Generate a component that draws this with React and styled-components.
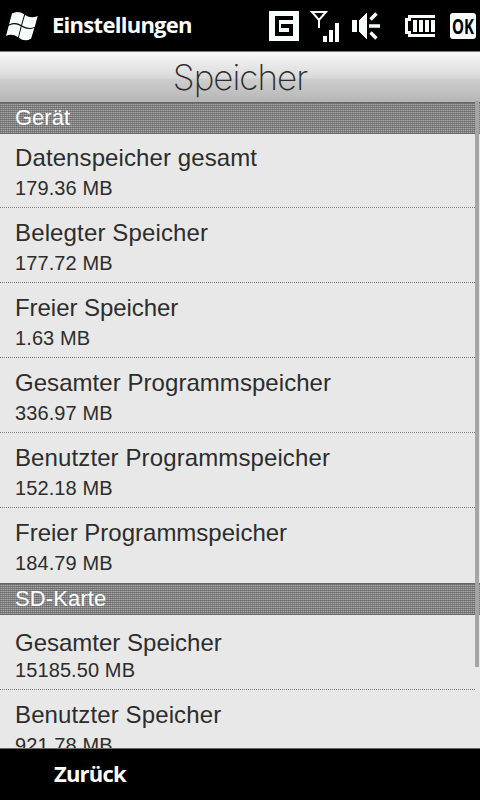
import React from 'react';
import styled, { createGlobalStyle } from 'styled-components';

const Global = createGlobalStyle`
  * { box-sizing: border-box; }
  body { margin: 0; background: #000; }
`;
const Screen = styled.div`
  position: relative;
  width: 480px;
  height: 800px;
  display: flex;
  flex-direction: column;
  overflow: hidden;
  background: #000;
  font-family: "Liberation Sans", Arial, sans-serif;
  color: #2d2d2d;
`;
const StatusBar = styled.header`
  height: 51px;
  flex: none;
  display: flex;
  align-items: flex-start;
  color: #fff;
`;
const StatusTitle = styled.span`
  width: 211px;
  margin-left: 11px;
  padding-top: 9px;
  font: 700 22px/30px "Open Sans", sans-serif;
  letter-spacing: -0.72px;
  white-space: nowrap;
`;
const StatusIcons = styled.svg`
  display: block;
  flex: none;
`;
const TitleBar = styled.h1`
  height: 51px;
  flex: none;
  margin: 0;
  border-top: 1px solid #7b7b7b;
  background: linear-gradient(#f8f8f8 0, #d9d9d9 26px, #cecece 27px, #b6b6b6 50px);
  text-align: center;
  font: 200 35px/50px Inter, sans-serif;
  letter-spacing: -1px;
  white-space: nowrap;
`;
const Content = styled.main`
  height: 646px;
  flex: none;
  overflow: hidden;
  background: #e8e8e8;
`;
const Section = styled.h2`
  height: 32px;
  margin: 0;
  padding-left: 15px;
  border-top: 1px solid #666;
  border-bottom: 1px solid #666;
  background:
    repeating-linear-gradient(90deg, rgba(70,70,70,.3) 0 1px, transparent 1px 2px),
    repeating-linear-gradient(#7a7a7a 0 1px, #a8a8a8 1px 2px);
  color: #fff;
  font-size: 22px;
  font-weight: 400;
  line-height: 30px;
  letter-spacing: ${p => p.$spacing || 0}px;
`;
const Row = styled.div`
  height: ${p => p.$height || 75}px;
  padding: ${p => p.$top || 11}px 0 0 15px;
  display: flex;
  flex-direction: column;
  gap: ${p => p.$gap ?? 4}px;
  background: ${p => p.$last ? 'none' : 'repeating-linear-gradient(90deg, #777 0 1px, #f4f4f4 1px 2px) 0 100% / 475px 1px no-repeat'};
`;
const Label = styled.span`
  font-size: 24px;
  line-height: 28px;
  letter-spacing: ${p => p.$spacing || 0}px;
  white-space: nowrap;
`;
const Value = styled.span`
  font-size: 20px;
  line-height: 24px;
  letter-spacing: 0.1px;
`;
const ScrollThumb = styled.div`
  position: absolute;
  top: 101px;
  right: 1px;
  width: 4px;
  height: 566px;
  background: #a5a5a5;
`;
const SoftKeys = styled.footer`
  height: 52px;
  flex: none;
  padding: 9px 0 0 54px;
  border-top: 1px solid #666;
  color: #fff;
  font: 700 22px/30px "Open Sans", sans-serif;
  letter-spacing: -0.8px;
`;
const WindowsFlag = () => (
  <StatusIcons width="41" height="51" viewBox="0 0 41 51" fill="#f7fdfa">
    <path d="M12 13.500Q18 10 24.200 14.300L21.200 25Q15.500 21.300 9 24.500Z" />
    <path d="M25 15Q31 19 37.700 16L34.700 27Q28 29.500 22 25.600Z" />
    <path d="M8.700 25.700Q15 22.500 20.800 26.200L18 37.200Q12 33.200 6 36Z" />
    <path d="M21.600 26.800Q28 30.600 34.300 28.100L31.200 38.500Q25 42.500 18.800 37.800Z" />
  </StatusIcons>
);
const Indicators = () => (
  <StatusIcons width="217" height="51" viewBox="263 0 217 51" fill="#f7fdfa" shapeRendering="crispEdges">
    <path d="M269 11H299V41H269Z" />
    <path d="M275 16H293V20H279V32H289V28H281V24H293V36H275Z" fill="#000" />
    <path d="M312 12H326L319 20ZM319 19V28" fill="none" stroke="#f7fdfa" strokeWidth="2" shapeRendering="auto" />
    <path d="M323 36H327V42H323ZM329 30H333V42H329ZM335 23H339V42H335Z" />
    <path d="M352 20H357V32H352ZM359 20L367 13V39L359 32Z" />
    <path d="M369 26H380M370.500 19.500L376.500 13.500M370.500 32.500L376.500 38.500" fill="none" stroke="#f7fdfa" strokeWidth="3.500" shapeRendering="auto" />
    <path d="M408 15H435V18H411V21H408V31H411V34H435V37H408V34H405V18H408Z" />
    <path d="M413 20H417V32H413ZM419 20H423V32H419ZM425 20H429V32H425ZM431 20H435V32H431Z" />
    <rect x="450" y="13" width="26" height="26" rx="3" shapeRendering="auto" />
    <text x="463" y="34" textAnchor="middle" textLength="22" lengthAdjust="spacingAndGlyphs" fontFamily="Open Sans, sans-serif" fontSize="21.500" fontWeight="700" fill="#000">OK</text>
  </StatusIcons>
);

const device = [
  ['Datenspeicher gesamt', '179.36 MB', 0.1],
  ['Belegter Speicher', '177.72 MB', 0.14],
  ['Freier Speicher', '1.63 MB', -0.05],
  ['Gesamter Programmspeicher', '336.97 MB', 0.05],
  ['Benutzter Programmspeicher', '152.18 MB', 0.11],
  ['Freier Programmspeicher', '184.79 MB', 0],
];

export default function App() {
  return (
    <>
      <Global />
      <Screen>
        <StatusBar>
          <WindowsFlag />
          <StatusTitle>Einstellungen</StatusTitle>
          <Indicators />
        </StatusBar>
        <TitleBar>Speicher</TitleBar>
        <Content>
          <Section>Gerät</Section>
          {device.map(([label, value, spacing], i) => (
            <Row key={label} $last={i === 5} $height={i ? 75 : 74} $top={i ? 11 : 10}>
              <Label $spacing={spacing}>{label}</Label>
              <Value>{value}</Value>
            </Row>
          ))}
          <Section $spacing={0.12}>SD-Karte</Section>
          <Row $gap={1} $top={14}>
            <Label>Gesamter Speicher</Label>
            <Value>15185.50 MB</Value>
          </Row>
          <Row $last>
            <Label $spacing={0.12}>Benutzter Speicher</Label>
            <Value>921.78 MB</Value>
          </Row>
        </Content>
        <SoftKeys>Zurück</SoftKeys>
        <ScrollThumb />
      </Screen>
    </>
  );
}
